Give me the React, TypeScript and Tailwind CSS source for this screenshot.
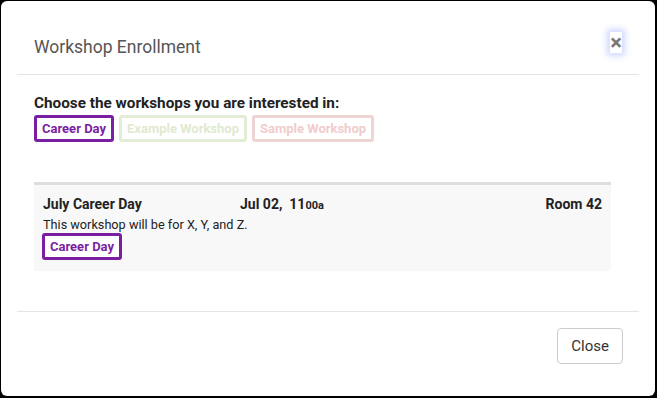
import React from "react";

const tags = [
  { name: "Career Day", cls: "border-[#7b1fa2] text-[#7b1fa2]" },
  { name: "Example Workshop", cls: "border-[#e3edd6] text-[#dfe9d0]" },
  { name: "Sample Workshop", cls: "border-[#f0d3d3] text-[#f0cccc]" },
];

const Tag = ({ name, cls }: { name: string; cls: string }) => (
  <span
    className={`inline-flex h-[27px] items-center rounded-[3px] border-[3px] bg-white px-[5px] text-[13px] font-bold ${cls}`}
  >
    {name}
  </span>
);

const App = () => {
  return (
    <div className="h-[398px] w-[657px] bg-black pl-[1px] pt-[1px] font-['Roboto',sans-serif]">
      <div className="flex h-[395px] w-[654px] flex-col rounded-[6px] bg-white px-[16px]">
        <div className="flex h-[74px] items-start justify-between border-b border-[#e5e5e5] px-[17px] pt-[31px]">
          <h4 className="mt-[5px] text-[17.5px] leading-[20px] text-[#555]">Workshop Enrollment</h4>
          <button className="flex h-[21px] w-[12px] items-center justify-center bg-white text-[22px] font-bold leading-none text-[#777] shadow-[0_0_6px_3px_rgba(120,140,255,0.35)]">
            ×
          </button>
        </div>

        <div className="flex flex-1 flex-col pl-[17px] pr-[28px] pt-[19px]">
          <p className="text-[15.3px] font-bold leading-[18px] text-[#222]">
            Choose the workshops you are interested in:
          </p>
          <div className="mt-[3px] flex gap-[5px]">
            {tags.map((t) => (
              <Tag key={t.name} {...t} />
            ))}
          </div>

          <div className="mt-[40px] border-t-[3px] border-[#dedede] bg-[#f8f8f8] pb-[11px] pl-[9px] pr-[9px] pt-[9px] text-[#222]">
            <div className="flex items-center text-[14px] font-bold">
              <span className="w-[197px]">July Career Day</span>
              <span>
                Jul 02,&nbsp; 11<span className="text-[11px]">00a</span>
              </span>
              <span className="ml-auto">Room 42</span>
            </div>
            <p className="mt-[2px] text-[12.7px] leading-[16px]">
              This workshop will be for X, Y, and Z.
            </p>
            <div className="-ml-[1px]">
              <Tag name="Career Day" cls="border-[#7b1fa2] text-[#7b1fa2]" />
            </div>
          </div>

          <div className="flex-1" />
        </div>

        <div className="flex h-[85px] items-start justify-end border-t border-[#e5e5e5] pr-[16px] pt-[16px]">
          <button className="h-[36px] rounded-[4px] border border-[#ccc] bg-white px-[13px] text-[15px] text-[#333]">
            Close
          </button>
        </div>
      </div>
    </div>
  );
};

export default App;
